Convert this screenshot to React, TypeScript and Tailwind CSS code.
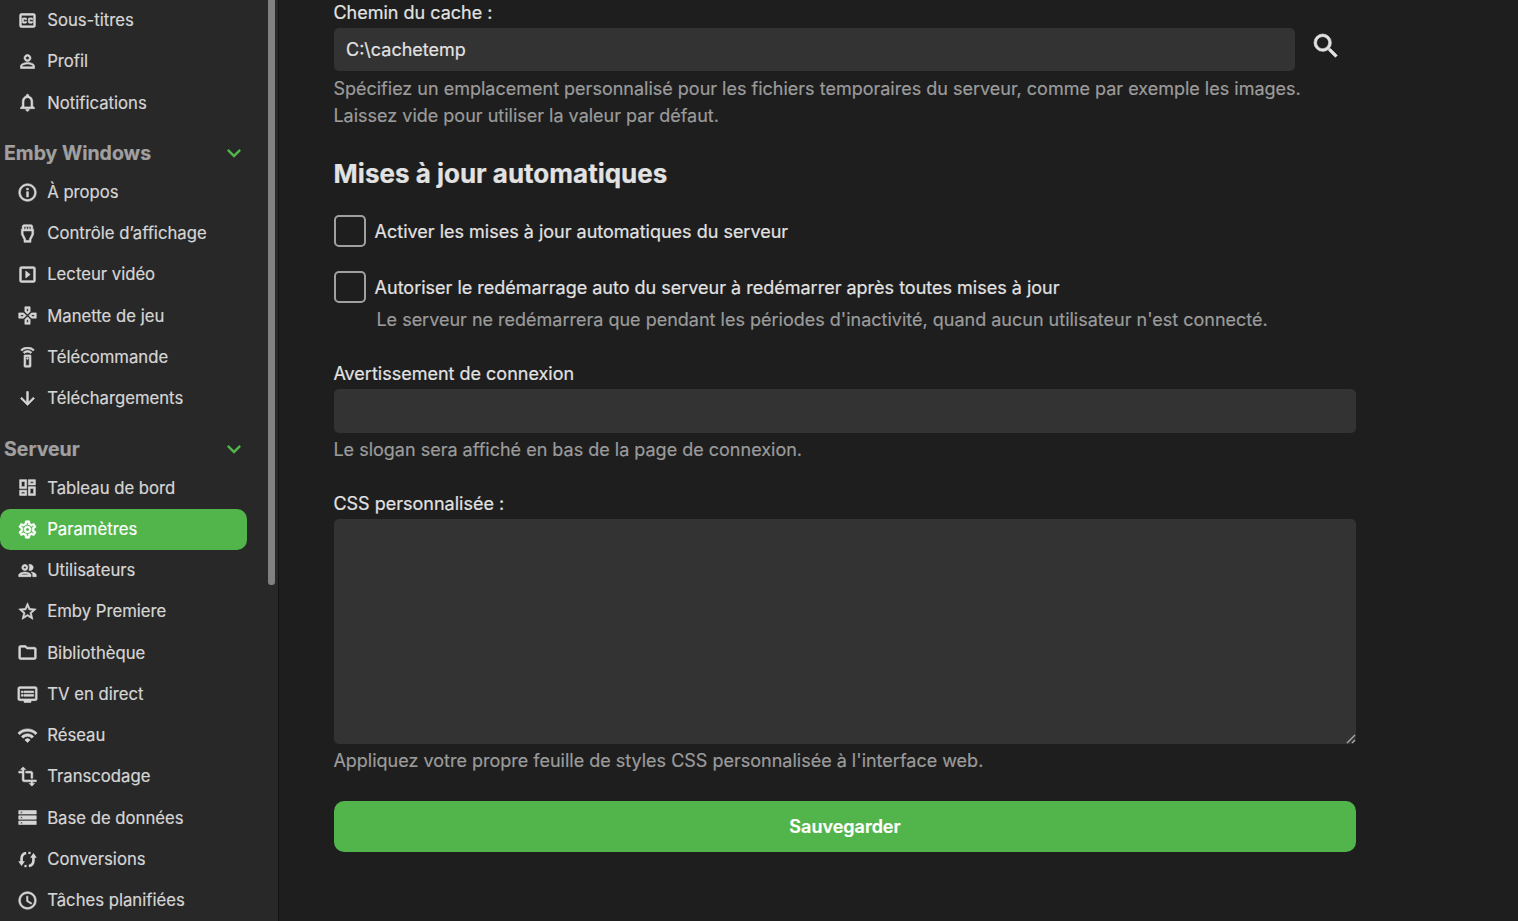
import {
  MdArrowDownward,
  MdInfoOutline,
  MdKeyboardArrowDown,
  MdOutlineClosedCaption,
  MdOutlineDashboard,
  MdOutlineDvr,
  MdOutlineFolder,
  MdOutlineGamepad,
  MdOutlineNotifications,
  MdOutlinePeople,
  MdOutlineSchedule,
  MdOutlineSettings,
  MdOutlineSettingsInputHdmi,
  MdOutlineSettingsRemote,
  MdOutlineSlideshow,
  MdPersonOutline,
  MdSearch,
  MdStarBorder,
  MdStorage,
  MdTransform,
  MdWifi,
} from "react-icons/md"
import type { ComponentType, ReactNode } from "react"

interface IconProps {
  className?: string
  strokeWidth?: number
}

interface NavItem {
  label: string
  icon: ComponentType<IconProps>
  active?: boolean
}

// the conversions glyph: two open arcs with arrowheads, no package has this one
function ConversionsIcon({ className }: IconProps) {
  return (
    <svg viewBox="0 0 24 24" className={className} fill="none">
      <path d="M10.5 4.6C7.2 5.2 5.2 8 5.2 11.2V15" stroke="currentColor" strokeWidth="3" />
      <path d="M1.4 14H9L5.2 19.5Z" fill="currentColor" />
      <path d="M8.5 19.5H11" stroke="currentColor" strokeWidth="2.6" />
      <path d="M13.5 19.4C16.8 18.8 18.8 16 18.8 12.8V9" stroke="currentColor" strokeWidth="3" />
      <path d="M15 10H22.6L18.8 4.5Z" fill="currentColor" />
      <path d="M13 4.5H15.5" stroke="currentColor" strokeWidth="2.6" />
    </svg>
  )
}

const userItems: NavItem[] = [
  { label: "Sous-titres", icon: MdOutlineClosedCaption },
  { label: "Profil", icon: MdPersonOutline },
  { label: "Notifications", icon: MdOutlineNotifications },
]

const embyItems: NavItem[] = [
  { label: "À propos", icon: MdInfoOutline },
  { label: "Contrôle d’affichage", icon: MdOutlineSettingsInputHdmi },
  { label: "Lecteur vidéo", icon: MdOutlineSlideshow },
  { label: "Manette de jeu", icon: MdOutlineGamepad },
  { label: "Télécommande", icon: MdOutlineSettingsRemote },
  { label: "Téléchargements", icon: MdArrowDownward },
]

const serverItems: NavItem[] = [
  { label: "Tableau de bord", icon: MdOutlineDashboard },
  { label: "Paramètres", icon: MdOutlineSettings, active: true },
  { label: "Utilisateurs", icon: MdOutlinePeople },
  { label: "Emby Premiere", icon: MdStarBorder },
  { label: "Bibliothèque", icon: MdOutlineFolder },
  { label: "TV en direct", icon: MdOutlineDvr },
  { label: "Réseau", icon: MdWifi },
  { label: "Transcodage", icon: MdTransform },
  { label: "Base de données", icon: MdStorage },
  { label: "Conversions", icon: ConversionsIcon },
  { label: "Tâches planifiées", icon: MdOutlineSchedule },
]

function NavRow({ item }: { item: NavItem }) {
  const Icon = item.icon
  return (
    <div
      className={
        item.active
          ? "flex h-[41.25px] w-[247px] shrink-0 items-center rounded-[10px] bg-[#52b54b] pl-[17px] text-white"
          : "flex h-[41.25px] w-[247px] shrink-0 items-center pl-[17px] text-[#d6d6d6]"
      }
    >
      <Icon className="h-[21px] w-[21px] shrink-0 [&_path[fill=none]]:stroke-none" strokeWidth={0.7} />
      <span className="ml-[9.2px] text-[16.7px] leading-none">{item.label}</span>
    </div>
  )
}

function NavHeader({ label }: { label: string }) {
  return (
    <div className="flex h-[27px] w-[247px] shrink-0 items-center justify-between pl-1">
      <span className="pt-[1.5px] text-[19.5px] font-bold leading-none text-[#a0a0a0]">{label}</span>
      <MdKeyboardArrowDown className="-mr-px h-7 w-7 text-[#52b54b]" />
    </div>
  )
}

function Sidebar() {
  return (
    <aside className="relative h-[921px] w-[279px] shrink-0 overflow-hidden border-r border-[#121212] bg-[#282828]">
      <div className="absolute right-[3px] top-0 h-[585px] w-[7px] rounded-b-[3px] bg-[#808080]" />
      <div className="-mt-[0.2px] flex flex-col">
        {userItems.map((item) => (
          <NavRow key={item.label} item={item} />
        ))}
        <div className="mt-4">
          <NavHeader label="Emby Windows" />
        </div>
        <div className="mt-[5px] flex flex-col">
          {embyItems.map((item) => (
            <NavRow key={item.label} item={item} />
          ))}
        </div>
        <div className="mt-[16.6px]">
          <NavHeader label="Serveur" />
        </div>
        <div className="mt-[4.65px] flex flex-col">
          {serverItems.map((item) => (
            <NavRow key={item.label} item={item} />
          ))}
        </div>
      </div>
    </aside>
  )
}

function Checkbox({ label }: { label: string }) {
  return (
    <div className="flex items-center">
      <span className="h-8 w-8 shrink-0 rounded-[5px] border-2 border-[#a0a0a0]" />
      <span className="ml-[8.6px] pt-[2px] text-[18px] leading-none text-[#e2e2e2]">{label}</span>
    </div>
  )
}

function Hint({ children, className }: { children: ReactNode; className?: string }) {
  return <p className={"text-[18px] leading-[27px] text-[#9b9b9b] " + (className ?? "")}>{children}</p>
}

export default function App() {
  return (
    <div className="flex h-[921px] w-[1518px] overflow-hidden bg-[#1e1e1e] font-['Inter',sans-serif] [-webkit-text-stroke:0.2px]">
      <Sidebar />
      <main className="ml-[55px] w-[1022px] shrink-0">
        <label className="-ml-[0.6px] block pt-[2px] text-[18px] leading-[22px] text-[#e2e2e2]">Chemin du cache :</label>
        <div className="mt-1 flex">
          <div className="flex h-[43px] w-[961px] items-center rounded-[5px] bg-[#333333] px-3 text-[18px] text-[#e2e2e2]">
            C:\cachetemp
          </div>
          <MdSearch className="ml-[15px] mt-[2px] h-[32px] w-[32px] text-[#e2e2e2] [&_path[fill=none]]:stroke-none" strokeWidth={0.5} />
        </div>
        <Hint className="-ml-[0.6px] mt-1 w-[1000px]">
          Spécifiez un emplacement personnalisé pour les fichiers temporaires du serveur, comme par exemple les images.
          <br />
          Laissez vide pour utiliser la valeur par défaut.
        </Hint>
        <h2 className="-ml-[0.4px] mt-[26px] text-[26px] font-bold leading-[38px] text-[#e2e2e2]">Mises à jour automatiques</h2>
        <div className="mt-[22px]">
          <Checkbox label="Activer les mises à jour automatiques du serveur" />
        </div>
        <div className="mt-6">
          <Checkbox label="Autoriser le redémarrage auto du serveur à redémarrer après toutes mises à jour" />
        </div>
        <Hint className="ml-[42.4px] mt-[3px]">
          Le serveur ne redémarrera que pendant les périodes d'inactivité, quand aucun utilisateur n'est connecté.
        </Hint>
        <label className="-ml-[0.6px] mt-[30px] block text-[18px] leading-[22px] text-[#e2e2e2]">Avertissement de connexion</label>
        <div className="mt-1 h-[44px] rounded-[5px] bg-[#333333]" />
        <Hint className="-ml-[0.6px] mt-[3px]">Le slogan sera affiché en bas de la page de connexion.</Hint>
        <label className="-ml-[0.6px] mt-[30px] block text-[18px] leading-[22px] text-[#e2e2e2]">CSS personnalisée :</label>
        <div className="relative mt-1 h-[225px] rounded-[5px] bg-[#333333]">
          <svg viewBox="0 0 10 10" className="absolute bottom-0 right-0 h-2.5 w-2.5">
            <path d="M1 9 L9 1 M6 9 L9 6" stroke="#a8a8a8" strokeWidth="1.4" />
          </svg>
        </div>
        <Hint className="-ml-[0.6px] mt-[3px]">Appliquez votre propre feuille de styles CSS personnalisée à l'interface web.</Hint>
        <button className="mt-[27px] flex h-[51px] w-full items-center justify-center rounded-[10px] bg-[#52b54b] text-[18px] font-semibold text-white">
          Sauvegarder
        </button>
      </main>
    </div>
  )
}
